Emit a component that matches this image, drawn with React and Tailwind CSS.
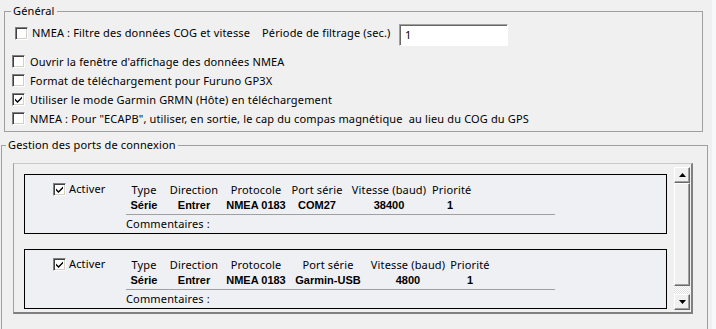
import React from 'react';

const ports = [
  {
    checked: true,
    cols: [
      { label: 'Type', value: 'Série', w: 'w-[40px]' },
      { label: 'Direction', value: 'Entrer', w: 'w-[60px]' },
      { label: 'Protocole', value: 'NMEA 0183', w: 'w-[64px]' },
      { label: 'Port série', value: 'COM27', w: 'w-[58px]' },
      { label: 'Vitesse (baud)', value: '38400', w: 'w-[86px]' },
      { label: 'Priorité', value: '1', w: 'w-[36px]' },
    ],
  },
  {
    checked: true,
    cols: [
      { label: 'Type', value: 'Série', w: 'w-[40px]' },
      { label: 'Direction', value: 'Entrer', w: 'w-[60px]' },
      { label: 'Protocole', value: 'NMEA 0183', w: 'w-[64px]' },
      { label: 'Port série', value: 'Garmin-USB', w: 'w-[80px]' },
      { label: 'Vitesse (baud)', value: '4800', w: 'w-[80px]' },
      { label: 'Priorité', value: '1', w: 'w-[44px]' },
    ],
  },
];

function CheckBox({ checked, className = '' }) {
  return (
    <span
      className={`flex h-[13px] w-[13px] shrink-0 items-center justify-center border border-t-[#808080] border-l-[#808080] border-b-white border-r-white bg-white shadow-[inset_1px_1px_0_#404040,inset_-1px_-1px_0_#d4d0c8] ${className}`}
    >
      {checked && (
        <svg width="7" height="7" viewBox="0 0 7 7">
          <path d="M0 2.5 L2.5 5 L7 0.5 L7 2.5 L2.5 7 L0 4.5 Z" fill="#000" />
        </svg>
      )}
    </span>
  );
}

function Arrow({ up }) {
  return (
    <div className="flex h-[16px] w-[16px] items-center justify-center border border-t-white border-l-white border-b-[#696969] border-r-[#696969] bg-[#f0f0f0] shadow-[inset_-1px_-1px_0_#a0a0a0]">
      <svg width="7" height="4" viewBox="0 0 7 4">
        <path d={up ? 'M3.5 0 L7 4 L0 4 Z' : 'M0 0 L7 0 L3.5 4 Z'} fill="#000" />
      </svg>
    </div>
  );
}

function PortCard({ port }) {
  return (
    <div className="flex h-[60px] w-[643px] border border-black bg-[#eef0f4]">
      <div className="flex w-[99px] items-start pt-[8px]">
        <CheckBox checked={port.checked} className="ml-[28px]" />
        <span className="ml-[3px] mt-[-1px] leading-[14px]">Activer</span>
      </div>
      <div className="flex flex-col pt-[8px]">
        <div className="flex leading-[14px]">
          {port.cols.map((c) => (
            <div key={c.label} className={`${c.w} whitespace-nowrap text-center`}>
              {c.label}
            </div>
          ))}
        </div>
        <div className="mt-[1px] flex font-['Liberation_Sans',Arial,sans-serif] font-bold leading-[14px] tracking-normal">
          {port.cols.map((c) => (
            <div key={c.label} className={`${c.w} whitespace-nowrap text-center`}>
              {c.value}
            </div>
          ))}
        </div>
        <div className="ml-[2px] mt-[2px] h-px w-[429px] bg-[#a0a0a0]" />
        <div className="ml-[2px] mt-[2px] leading-[14px]">Commentaires :</div>
      </div>
    </div>
  );
}

export default function App() {
  return (
    <div className="flex h-[329px] w-[716px] overflow-hidden bg-[#f0f0f0] font-['Noto_Sans',Arial,sans-serif] text-[11px] tracking-[0.15px] text-black">
      <div className="w-[712px]">
        {/* Général */}
        <fieldset className="ml-[4px] mt-[4px] w-[699px] border border-[#a0a0a0] pb-[3px]">
          <legend className="ml-[6px] px-[2px] leading-[14px]">Général</legend>

          <div className="mt-[6px] flex h-[22px] items-start">
            <CheckBox className="ml-[10px] mt-[3px]" />
            <span className="ml-[4px] mt-[2px] w-[230px] whitespace-nowrap leading-[13px]">
              NMEA : Filtre des données COG et vitesse
            </span>
            <span className="mt-[2px] w-[137px] whitespace-nowrap leading-[13px]">
              Période de filtrage (sec.)
            </span>
            <div className="h-[22px] w-[109px] border border-t-[#a0a0a0] border-l-[#a0a0a0] border-b-white border-r-white bg-white pl-[5px] pt-[3px] leading-[13px] shadow-[inset_1px_1px_0_#696969]">
              1
            </div>
          </div>

          <div className="mt-[6px] flex flex-col">
            {[
              ["Ouvrir la fenêtre d'affichage des données NMEA", false],
              ['Format de téléchargement pour Furuno GP3X', false],
              ['Utiliser le mode Garmin GRMN (Hôte) en téléchargement', true],
              ['NMEA : Pour "ECAPB", utiliser, en sortie, le cap du compas magnétique  au lieu du COG du GPS', false],
            ].map(([label, checked]) => (
              <div key={label} className="flex h-[19px] items-center">
                <CheckBox checked={checked} className="ml-[7px]" />
                <span className="ml-[5px] whitespace-pre leading-[13px]">{label}</span>
              </div>
            ))}
          </div>
        </fieldset>

        {/* Gestion des ports */}
        <fieldset className="ml-[1px] mt-[6px] h-[200px] w-[707px] border border-[#a0a0a0]">
          <legend className="ml-[4px] px-[2px] leading-[14px]">Gestion des ports de connexion</legend>

          <div className="ml-[11px] mt-[11px] flex h-[151px] w-[680px] border border-t-[#c8c8c8] border-l-[#a0a0a0] border-b-2 border-r-2 border-b-[#808080] border-r-[#808080]">
            <div className="flex flex-col gap-[15px] pl-[10px] pt-[10px]">
              {ports.map((p, i) => (
                <PortCard key={i} port={p} />
              ))}
            </div>
            <div className="ml-[7px] mt-[3px] flex h-[143px] w-[16px] flex-col">
              <Arrow up />
              <div className="h-[103px] border border-t-white border-l-white border-b-[#696969] border-r-[#696969] bg-[#f0f0f0] shadow-[inset_-1px_-1px_0_#a0a0a0]" />
              <div className="h-[8px] bg-[repeating-conic-gradient(#ffffff_0_25%,#e0e0e0_0_50%)] bg-[length:2px_2px]" />
              <Arrow />
            </div>
          </div>
        </fieldset>
      </div>
      <div className="w-[4px] bg-[#f7f8fb]" />
    </div>
  );
}
